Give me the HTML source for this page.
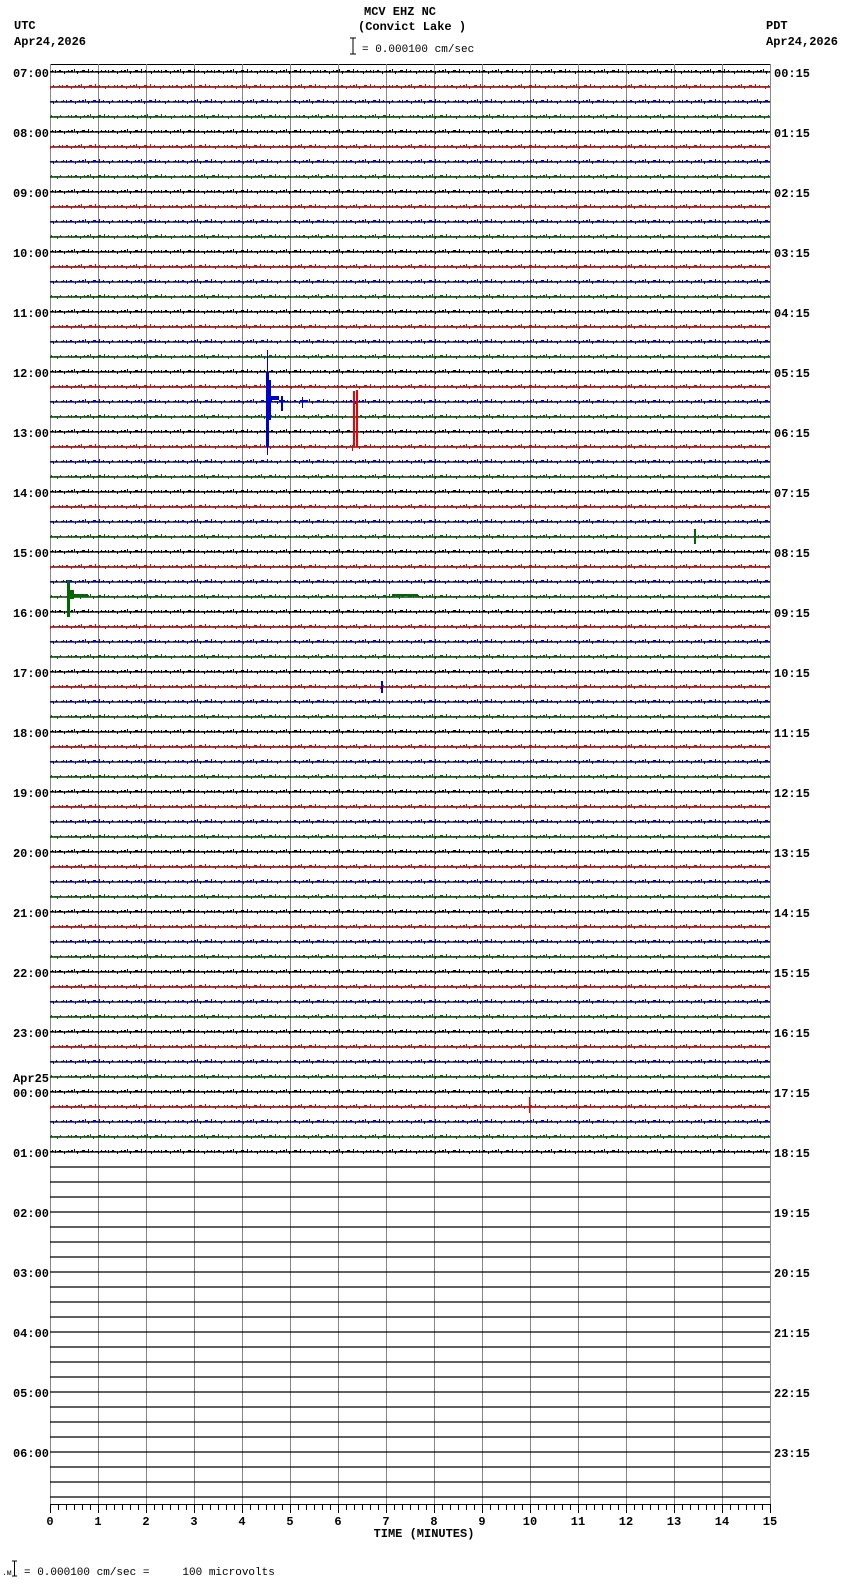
<!DOCTYPE html>
<html><head><meta charset="utf-8"><style>
html,body{margin:0;padding:0;background:#fff;}
svg{display:block;}
text{font-family:"Liberation Mono",monospace;font-weight:bold;font-size:12px;fill:#000;}
.r{font-weight:normal;font-size:11px;}
</style></head><body>
<svg width="850" height="1584" viewBox="0 0 850 1584" xmlns="http://www.w3.org/2000/svg">
<defs>
<g id="tk">
<rect x="0" y="3" width="4" height="1"/><rect x="2" y="2" width="1" height="1"/><rect x="5" y="2" width="1" height="3"/><rect x="7" y="3" width="6" height="1"/><rect x="9" y="2" width="2" height="1"/><rect x="14" y="3" width="1" height="3"/><rect x="16" y="3" width="7" height="1"/><rect x="18" y="2" width="1" height="1"/><rect x="21" y="2" width="2" height="1"/><rect x="24" y="1" width="1" height="3"/><rect x="26" y="3" width="3" height="1"/><rect x="27" y="4" width="1" height="2"/><rect x="30" y="3" width="8" height="1"/><rect x="32" y="2" width="3" height="1"/><rect x="38" y="1" width="1" height="4"/><rect x="40" y="3" width="4" height="1"/><rect x="42" y="2" width="1" height="1"/><rect x="45" y="3" width="3" height="1"/><rect x="48" y="3" width="1" height="3"/><rect x="50" y="3" width="3" height="1"/><rect x="51" y="2" width="1" height="1"/>
</g>
<pattern id="p0" patternUnits="userSpaceOnUse" x="50" y="8" width="53" height="15"><use href="#tk" fill="#000"/></pattern>
<pattern id="p1" patternUnits="userSpaceOnUse" x="57" y="8" width="55" height="15"><use href="#tk" fill="#e00"/></pattern>
<pattern id="p2" patternUnits="userSpaceOnUse" x="61" y="8" width="56" height="15"><use href="#tk" fill="#00c"/></pattern>
<pattern id="p3" patternUnits="userSpaceOnUse" x="66" y="8" width="57" height="15"><use href="#tk" fill="#060"/></pattern>
</defs>

<!-- header -->
<text x="364" y="15">MCV EHZ NC</text>
<text x="358" y="30">(Convict Lake )</text>
<path d="M353 38v16M350 38h6M350 54h6" stroke="#000" stroke-width="1"/>
<text class="r" x="362" y="52">= 0.000100 cm/sec</text>
<text x="14" y="29">UTC</text>
<text x="14" y="45">Apr24,2026</text>
<text x="766" y="29">PDT</text>
<text x="766" y="45">Apr24,2026</text>

<!-- box & grid -->
<line x1="50" y1="64.5" x2="770" y2="64.5" stroke="#000"/>
<g stroke="#888" stroke-width="1">
<path d="M50.5 64v1440M98.5 64v1440M146.5 64v1440M194.5 64v1440M242.5 64v1440M290.5 64v1440M338.5 64v1440M386.5 64v1440M434.5 64v1440M482.5 64v1440M530.5 64v1440M578.5 64v1440M626.5 64v1440M674.5 64v1440M722.5 64v1440M770.5 64v1440"/>
</g>

<!-- baselines -->
<path stroke="#000" stroke-width="1.3" d="M50 72H770M50 87H770M50 102H770M50 117H770M50 132H770M50 147H770M50 162H770M50 177H770M50 192H770M50 207H770M50 222H770M50 237H770M50 252H770M50 267H770M50 282H770M50 297H770M50 312H770M50 327H770M50 342H770M50 357H770M50 372H770M50 387H770M50 402H770M50 417H770M50 432H770M50 447H770M50 462H770M50 477H770M50 492H770M50 507H770M50 522H770M50 537H770M50 552H770M50 567H770M50 582H770M50 597H770M50 612H770M50 627H770M50 642H770M50 657H770M50 672H770M50 687H770M50 702H770M50 717H770M50 732H770M50 747H770M50 762H770M50 777H770M50 792H770M50 807H770M50 822H770M50 837H770M50 852H770M50 867H770M50 882H770M50 897H770M50 912H770M50 927H770M50 942H770M50 957H770M50 972H770M50 987H770M50 1002H770M50 1017H770M50 1032H770M50 1047H770M50 1062H770M50 1077H770M50 1092H770M50 1107H770M50 1122H770M50 1137H770M50 1152H770M50 1167H770M50 1182H770M50 1197H770M50 1212H770M50 1227H770M50 1242H770M50 1257H770M50 1272H770M50 1287H770M50 1302H770M50 1317H770M50 1332H770M50 1347H770M50 1362H770M50 1377H770M50 1392H770M50 1407H770M50 1422H770M50 1437H770M50 1452H770M50 1467H770M50 1482H770M50 1497H770"/>

<!-- noise -->
<g>
<rect x="50" y="68" width="720" height="6" fill="url(#p0)"/><rect x="50" y="83" width="720" height="6" fill="url(#p1)"/><rect x="50" y="98" width="720" height="6" fill="url(#p2)"/><rect x="50" y="113" width="720" height="6" fill="url(#p3)"/>
<rect x="50" y="128" width="720" height="6" fill="url(#p0)"/><rect x="50" y="143" width="720" height="6" fill="url(#p1)"/><rect x="50" y="158" width="720" height="6" fill="url(#p2)"/><rect x="50" y="173" width="720" height="6" fill="url(#p3)"/>
<rect x="50" y="188" width="720" height="6" fill="url(#p0)"/><rect x="50" y="203" width="720" height="6" fill="url(#p1)"/><rect x="50" y="218" width="720" height="6" fill="url(#p2)"/><rect x="50" y="233" width="720" height="6" fill="url(#p3)"/>
<rect x="50" y="248" width="720" height="6" fill="url(#p0)"/><rect x="50" y="263" width="720" height="6" fill="url(#p1)"/><rect x="50" y="278" width="720" height="6" fill="url(#p2)"/><rect x="50" y="293" width="720" height="6" fill="url(#p3)"/>
<rect x="50" y="308" width="720" height="6" fill="url(#p0)"/><rect x="50" y="323" width="720" height="6" fill="url(#p1)"/><rect x="50" y="338" width="720" height="6" fill="url(#p2)"/><rect x="50" y="353" width="720" height="6" fill="url(#p3)"/>
<rect x="50" y="368" width="720" height="6" fill="url(#p0)"/><rect x="50" y="383" width="720" height="6" fill="url(#p1)"/><rect x="50" y="398" width="720" height="6" fill="url(#p2)"/><rect x="50" y="413" width="720" height="6" fill="url(#p3)"/>
<rect x="50" y="428" width="720" height="6" fill="url(#p0)"/><rect x="50" y="443" width="720" height="6" fill="url(#p1)"/><rect x="50" y="458" width="720" height="6" fill="url(#p2)"/><rect x="50" y="473" width="720" height="6" fill="url(#p3)"/>
<rect x="50" y="488" width="720" height="6" fill="url(#p0)"/><rect x="50" y="503" width="720" height="6" fill="url(#p1)"/><rect x="50" y="518" width="720" height="6" fill="url(#p2)"/><rect x="50" y="533" width="720" height="6" fill="url(#p3)"/>
<rect x="50" y="548" width="720" height="6" fill="url(#p0)"/><rect x="50" y="563" width="720" height="6" fill="url(#p1)"/><rect x="50" y="578" width="720" height="6" fill="url(#p2)"/><rect x="50" y="593" width="720" height="6" fill="url(#p3)"/>
<rect x="50" y="608" width="720" height="6" fill="url(#p0)"/><rect x="50" y="623" width="720" height="6" fill="url(#p1)"/><rect x="50" y="638" width="720" height="6" fill="url(#p2)"/><rect x="50" y="653" width="720" height="6" fill="url(#p3)"/>
<rect x="50" y="668" width="720" height="6" fill="url(#p0)"/><rect x="50" y="683" width="720" height="6" fill="url(#p1)"/><rect x="50" y="698" width="720" height="6" fill="url(#p2)"/><rect x="50" y="713" width="720" height="6" fill="url(#p3)"/>
<rect x="50" y="728" width="720" height="6" fill="url(#p0)"/><rect x="50" y="743" width="720" height="6" fill="url(#p1)"/><rect x="50" y="758" width="720" height="6" fill="url(#p2)"/><rect x="50" y="773" width="720" height="6" fill="url(#p3)"/>
<rect x="50" y="788" width="720" height="6" fill="url(#p0)"/><rect x="50" y="803" width="720" height="6" fill="url(#p1)"/><rect x="50" y="818" width="720" height="6" fill="url(#p2)"/><rect x="50" y="833" width="720" height="6" fill="url(#p3)"/>
<rect x="50" y="848" width="720" height="6" fill="url(#p0)"/><rect x="50" y="863" width="720" height="6" fill="url(#p1)"/><rect x="50" y="878" width="720" height="6" fill="url(#p2)"/><rect x="50" y="893" width="720" height="6" fill="url(#p3)"/>
<rect x="50" y="908" width="720" height="6" fill="url(#p0)"/><rect x="50" y="923" width="720" height="6" fill="url(#p1)"/><rect x="50" y="938" width="720" height="6" fill="url(#p2)"/><rect x="50" y="953" width="720" height="6" fill="url(#p3)"/>
<rect x="50" y="968" width="720" height="6" fill="url(#p0)"/><rect x="50" y="983" width="720" height="6" fill="url(#p1)"/><rect x="50" y="998" width="720" height="6" fill="url(#p2)"/><rect x="50" y="1013" width="720" height="6" fill="url(#p3)"/>
<rect x="50" y="1028" width="720" height="6" fill="url(#p0)"/><rect x="50" y="1043" width="720" height="6" fill="url(#p1)"/><rect x="50" y="1058" width="720" height="6" fill="url(#p2)"/><rect x="50" y="1073" width="720" height="6" fill="url(#p3)"/>
<rect x="50" y="1088" width="720" height="6" fill="url(#p0)"/><rect x="50" y="1103" width="720" height="6" fill="url(#p1)"/><rect x="50" y="1118" width="720" height="6" fill="url(#p2)"/><rect x="50" y="1133" width="720" height="6" fill="url(#p3)"/>
<rect x="50" y="1148" width="720" height="6" fill="url(#p0)"/>
</g>

<!-- events -->
<g fill="#00c">
<rect x="267" y="350" width="1" height="105"/><rect x="266" y="372" width="3" height="75"/><rect x="268" y="380" width="3" height="40"/><rect x="271" y="396" width="8" height="4"/>
<rect x="281" y="396" width="2" height="15"/><rect x="279" y="400" width="6" height="2"/><rect x="302" y="397" width="1" height="11"/><rect x="300" y="400" width="6" height="2"/>
<rect x="381" y="681" width="2" height="12"/>
</g>
<g fill="#e00">
<rect x="353" y="391" width="2" height="56"/><rect x="356" y="390" width="2" height="57"/><rect x="352" y="445" width="1" height="6"/>
<rect x="529" y="1097" width="1" height="16"/>
</g>
<g fill="#060">
<rect x="694" y="529" width="2" height="15"/>
<rect x="67" y="580" width="3" height="37"/><rect x="70" y="590" width="4" height="9"/><rect x="74" y="594" width="14" height="3"/><rect x="392" y="594" width="26" height="2"/>
</g>

<!-- axis -->
<line x1="50" y1="1504.5" x2="770" y2="1504.5" stroke="#000"/>
<path stroke="#000" d="M50.5 1504v9M58.5 1504v6M66.5 1504v6M74.5 1504v6M82.5 1504v6M90.5 1504v6M98.5 1504v9M106.5 1504v6M114.5 1504v6M122.5 1504v6M130.5 1504v6M138.5 1504v6M146.5 1504v9M154.5 1504v6M162.5 1504v6M170.5 1504v6M178.5 1504v6M186.5 1504v6M194.5 1504v9M202.5 1504v6M210.5 1504v6M218.5 1504v6M226.5 1504v6M234.5 1504v6M242.5 1504v9M250.5 1504v6M258.5 1504v6M266.5 1504v6M274.5 1504v6M282.5 1504v6M290.5 1504v9M298.5 1504v6M306.5 1504v6M314.5 1504v6M322.5 1504v6M330.5 1504v6M338.5 1504v9M346.5 1504v6M354.5 1504v6M362.5 1504v6M370.5 1504v6M378.5 1504v6M386.5 1504v9M394.5 1504v6M402.5 1504v6M410.5 1504v6M418.5 1504v6M426.5 1504v6M434.5 1504v9M442.5 1504v6M450.5 1504v6M458.5 1504v6M466.5 1504v6M474.5 1504v6M482.5 1504v9M490.5 1504v6M498.5 1504v6M506.5 1504v6M514.5 1504v6M522.5 1504v6M530.5 1504v9M538.5 1504v6M546.5 1504v6M554.5 1504v6M562.5 1504v6M570.5 1504v6M578.5 1504v9M586.5 1504v6M594.5 1504v6M602.5 1504v6M610.5 1504v6M618.5 1504v6M626.5 1504v9M634.5 1504v6M642.5 1504v6M650.5 1504v6M658.5 1504v6M666.5 1504v6M674.5 1504v9M682.5 1504v6M690.5 1504v6M698.5 1504v6M706.5 1504v6M714.5 1504v6M722.5 1504v9M730.5 1504v6M738.5 1504v6M746.5 1504v6M754.5 1504v6M762.5 1504v6M770.5 1504v9"/>
<g text-anchor="middle">
<text x="50" y="1525">0</text><text x="98" y="1525">1</text><text x="146" y="1525">2</text><text x="194" y="1525">3</text><text x="242" y="1525">4</text><text x="290" y="1525">5</text><text x="338" y="1525">6</text><text x="386" y="1525">7</text><text x="434" y="1525">8</text><text x="482" y="1525">9</text><text x="530" y="1525">10</text><text x="578" y="1525">11</text><text x="626" y="1525">12</text><text x="674" y="1525">13</text><text x="722" y="1525">14</text><text x="770" y="1525">15</text>
<text x="424" y="1537">TIME (MINUTES)</text>
</g>

<!-- left labels -->
<g text-anchor="end">
<text x="49" y="77">07:00</text><text x="49" y="137">08:00</text><text x="49" y="197">09:00</text><text x="49" y="257">10:00</text><text x="49" y="317">11:00</text><text x="49" y="377">12:00</text><text x="49" y="437">13:00</text><text x="49" y="497">14:00</text><text x="49" y="557">15:00</text><text x="49" y="617">16:00</text><text x="49" y="677">17:00</text><text x="49" y="737">18:00</text><text x="49" y="797">19:00</text><text x="49" y="857">20:00</text><text x="49" y="917">21:00</text><text x="49" y="977">22:00</text><text x="49" y="1037">23:00</text><text x="49" y="1082">Apr25</text><text x="49" y="1097">00:00</text><text x="49" y="1157">01:00</text><text x="49" y="1217">02:00</text><text x="49" y="1277">03:00</text><text x="49" y="1337">04:00</text><text x="49" y="1397">05:00</text><text x="49" y="1457">06:00</text>
</g>
<!-- right labels -->
<g>
<text x="774" y="77">00:15</text><text x="774" y="137">01:15</text><text x="774" y="197">02:15</text><text x="774" y="257">03:15</text><text x="774" y="317">04:15</text><text x="774" y="377">05:15</text><text x="774" y="437">06:15</text><text x="774" y="497">07:15</text><text x="774" y="557">08:15</text><text x="774" y="617">09:15</text><text x="774" y="677">10:15</text><text x="774" y="737">11:15</text><text x="774" y="797">12:15</text><text x="774" y="857">13:15</text><text x="774" y="917">14:15</text><text x="774" y="977">15:15</text><text x="774" y="1037">16:15</text><text x="774" y="1097">17:15</text><text x="774" y="1157">18:15</text><text x="774" y="1217">19:15</text><text x="774" y="1277">20:15</text><text x="774" y="1337">21:15</text><text x="774" y="1397">22:15</text><text x="774" y="1457">23:15</text>
</g>

<!-- legend -->
<text class="r" x="2" y="1575" style="font-size:8px">.м</text>
<path d="M14.5 1561v15M12 1561h5M12 1576h5" stroke="#000"/>
<text class="r" x="24" y="1575">= 0.000100 cm/sec =&#160;&#160;&#160;&#160;&#160;100 microvolts</text>
</svg>
</body></html>
